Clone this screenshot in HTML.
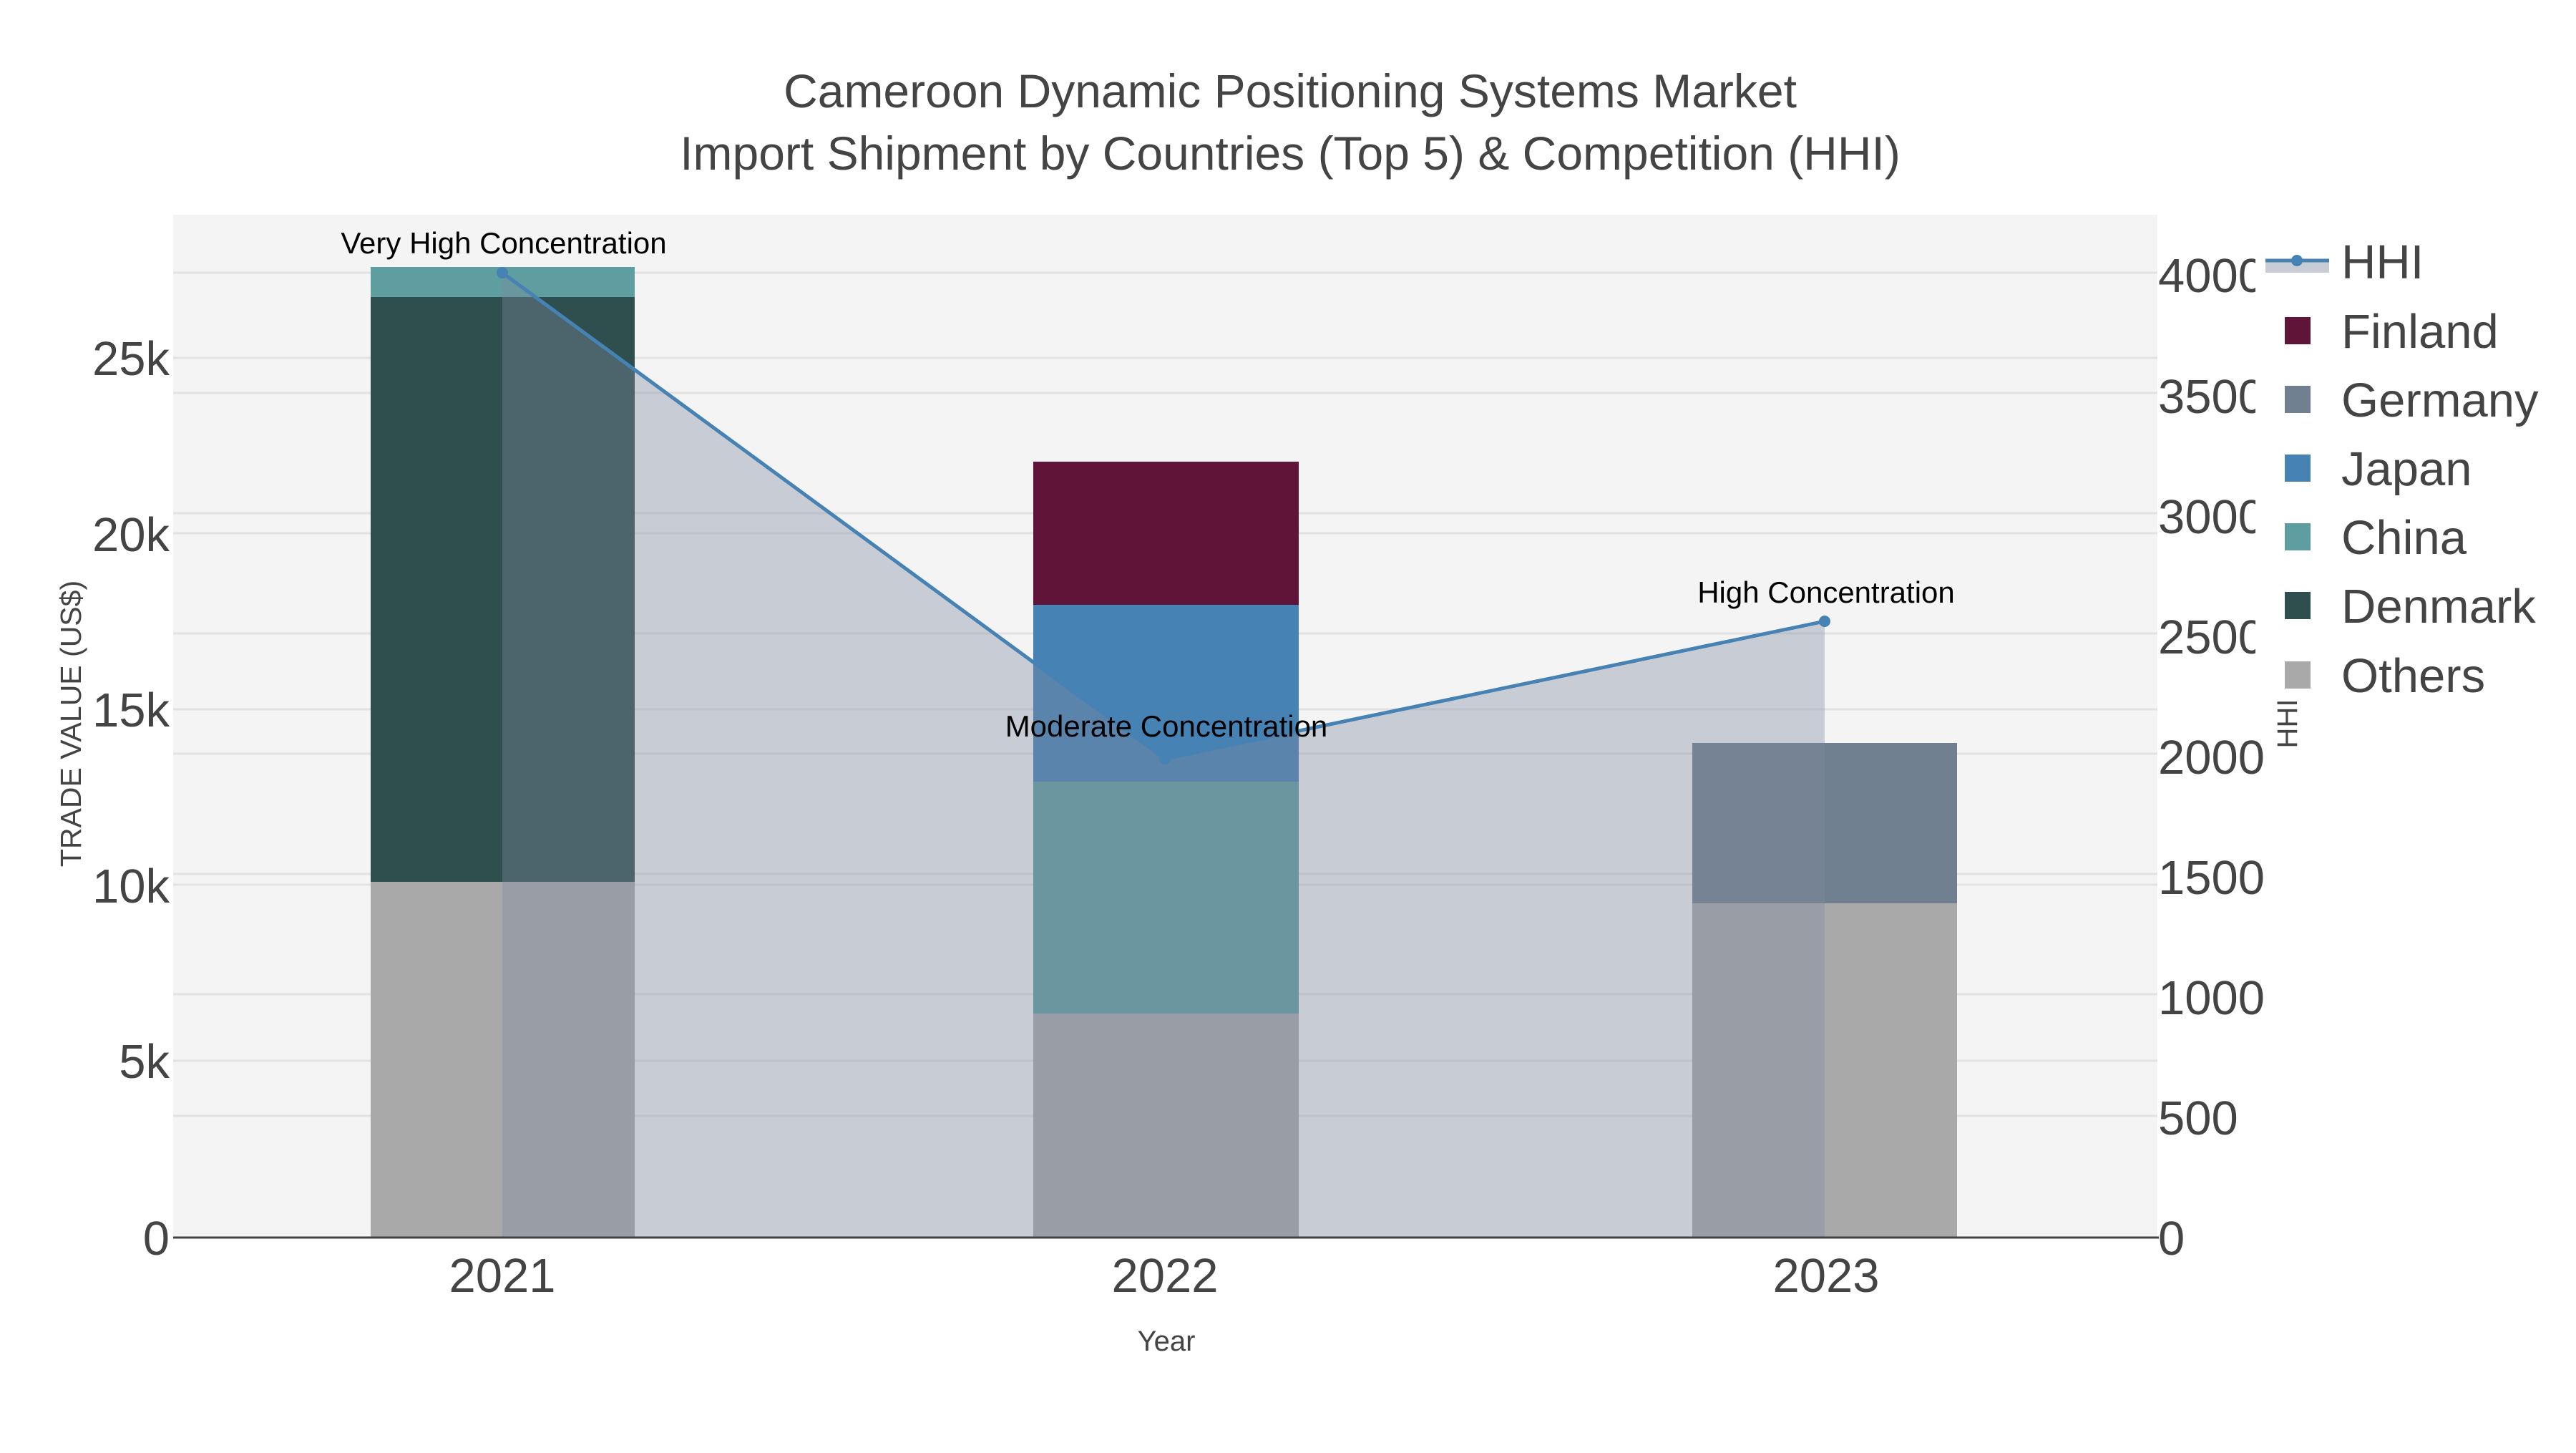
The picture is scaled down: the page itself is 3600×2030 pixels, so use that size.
<!DOCTYPE html>
<html><head><meta charset="utf-8"><style>html,body{margin:0;padding:0;background:#fff}</style></head><body>
<svg width="3600" height="2025" xmlns="http://www.w3.org/2000/svg" font-family="Liberation Sans, sans-serif">
<rect width="3600" height="2025" fill="#fff"/>
<rect x="242" y="300" width="2773" height="1429" fill="#f4f4f4"/>
<g stroke="#e2e2e2" stroke-width="3">
<line x1="242" x2="3015" y1="381" y2="381"/><line x1="242" x2="3015" y1="549" y2="549"/><line x1="242" x2="3015" y1="717" y2="717"/><line x1="242" x2="3015" y1="885" y2="885"/><line x1="242" x2="3015" y1="1053" y2="1053"/><line x1="242" x2="3015" y1="1221" y2="1221"/><line x1="242" x2="3015" y1="1389" y2="1389"/><line x1="242" x2="3015" y1="1559" y2="1559"/>
<line x1="242" x2="3015" y1="500" y2="500"/><line x1="242" x2="3015" y1="745" y2="745"/><line x1="242" x2="3015" y1="991" y2="991"/><line x1="242" x2="3015" y1="1236" y2="1236"/><line x1="242" x2="3015" y1="1482" y2="1482"/>
</g>
<rect x="518" y="1232" width="369" height="497" fill="#a9a9a9"/>
<rect x="518" y="415" width="369" height="817" fill="#2f4f4f"/>
<rect x="518" y="373" width="369" height="42" fill="#5f9ea0"/>
<rect x="1444" y="1416" width="371" height="313" fill="#a9a9a9"/>
<rect x="1444" y="1092" width="371" height="324" fill="#5f9ea0"/>
<rect x="1444" y="845" width="371" height="247" fill="#4682b4"/>
<rect x="1444" y="645" width="371" height="200" fill="#601437"/>
<rect x="2365" y="1262" width="370" height="467" fill="#a9a9a9"/>
<rect x="2365" y="1038" width="370" height="224" fill="#708090"/>
<polygon points="702,381 1628,1060 2550,868 2550,1729 702,1729" fill="rgb(126,137,158)" fill-opacity="0.373"/>
<polyline points="702,381 1628,1060 2550,868" fill="none" stroke="#4682b4" stroke-width="5"/>
<circle cx="702" cy="381" r="8" fill="#4682b4"/><circle cx="1628" cy="1060" r="8" fill="#4682b4"/><circle cx="2550" cy="868" r="8" fill="#4682b4"/>
<line x1="242" x2="3017" y1="1729" y2="1729" stroke="#444" stroke-width="3"/>
<g font-size="42" fill="#000" text-anchor="middle">
<text x="704" y="354">Very High Concentration</text>
<text x="1630" y="1029">Moderate Concentration</text>
<text x="2552" y="842">High Concentration</text>
</g>
<g font-size="67" fill="#444" text-anchor="end">
<text x="237" y="1753">0</text><text x="237" y="1506">5k</text><text x="237" y="1261">10k</text><text x="237" y="1015">15k</text><text x="237" y="770">20k</text><text x="237" y="524">25k</text>
</g>
<text transform="translate(113,1011) rotate(-90)" font-size="41" fill="#444" text-anchor="middle">TRADE VALUE (US$)</text>
<g font-size="67" fill="#444">
<text x="3016" y="1753">0</text><text x="3016" y="1585">500</text><text x="3016" y="1417">1000</text><text x="3016" y="1249">1500</text><text x="3016" y="1081">2000</text><text x="3016" y="913">2500</text><text x="3016" y="745">3000</text><text x="3016" y="577">3500</text><text x="3016" y="408">4000</text>
</g>
<rect x="3152" y="300" width="448" height="690" fill="#fff"/>
<text transform="translate(3210,1011) rotate(-90)" font-size="40" fill="#444" text-anchor="middle">HHI</text>
<g font-size="67" fill="#444" text-anchor="middle">
<text x="702" y="1805">2021</text><text x="1628" y="1805">2022</text><text x="2552" y="1805">2023</text>
</g>
<text x="1630" y="1887" font-size="40" fill="#444" text-anchor="middle">Year</text>
<g font-size="66" fill="#444" text-anchor="middle">
<text x="1803" y="150">Cameroon Dynamic Positioning Systems Market</text>
<text x="1803" y="237">Import Shipment by Countries (Top 5) &amp; Competition (HHI)</text>
</g>
<rect x="3166" y="365" width="89" height="16" fill="#c8ccd4"/>
<line x1="3166" x2="3255" y1="364" y2="364" stroke="#4682b4" stroke-width="5"/>
<circle cx="3210" cy="364" r="8" fill="#4682b4"/>
<rect x="3193" y="443" width="36" height="38" fill="#601437"/>
<rect x="3193" y="539" width="36" height="38" fill="#708090"/>
<rect x="3193" y="635" width="36" height="38" fill="#4682b4"/>
<rect x="3193" y="731" width="36" height="38" fill="#5f9ea0"/>
<rect x="3193" y="827" width="36" height="38" fill="#2f4f4f"/>
<rect x="3193" y="924" width="36" height="38" fill="#a9a9a9"/>
<g font-size="67" fill="#444">
<text x="3272" y="389">HHI</text><text x="3272" y="486">Finland</text><text x="3272" y="582">Germany</text><text x="3272" y="678">Japan</text><text x="3272" y="774">China</text><text x="3272" y="870">Denmark</text><text x="3272" y="967">Others</text>
</g>
</svg>
</body></html>
